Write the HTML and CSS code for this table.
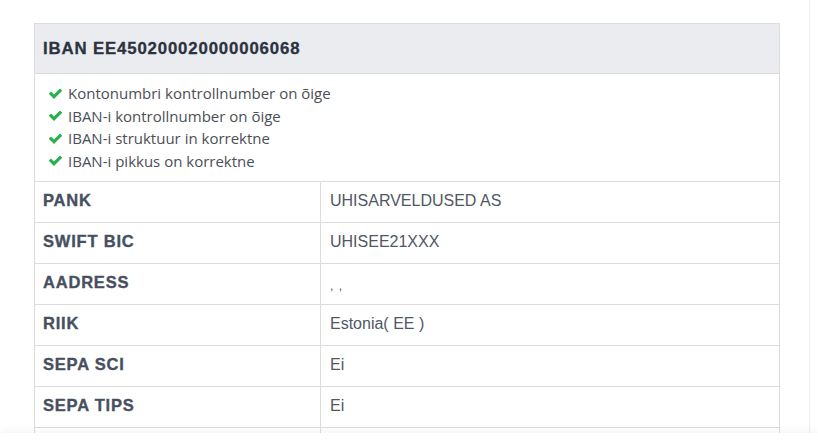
FILE: index.html
```html
<!DOCTYPE html>
<html lang="et">
<head>
<meta charset="utf-8">
<title>IBAN EE450200020000006068</title>
<link rel="stylesheet" href="styles.css">
</head>
<body>
<div class="page">
  <div class="card">
    <div class="card-head">IBAN EE450200020000006068</div>
    <ul class="checks">
      <li><svg class="ok" viewBox="0 250 1792 1300"><path d="M1671 566q0 40-28 68l-724 724-136 136q-28 28-68 28t-68-28l-136-136-362-362q-28-28-28-68t28-68l136-136q28-28 68-28t68 28l294 295 656-657q28-28 68-28t68 28l136 136q28 28 28 68z"/></svg>Kontonumbri kontrollnumber on õige</li>
      <li><svg class="ok" viewBox="0 250 1792 1300"><path d="M1671 566q0 40-28 68l-724 724-136 136q-28 28-68 28t-68-28l-136-136-362-362q-28-28-28-68t28-68l136-136q28-28 68-28t68 28l294 295 656-657q28-28 68-28t68 28l136 136q28 28 28 68z"/></svg>IBAN-i kontrollnumber on õige</li>
      <li><svg class="ok" viewBox="0 250 1792 1300"><path d="M1671 566q0 40-28 68l-724 724-136 136q-28 28-68 28t-68-28l-136-136-362-362q-28-28-28-68t28-68l136-136q28-28 68-28t68 28l294 295 656-657q28-28 68-28t68 28l136 136q28 28 28 68z"/></svg>IBAN-i struktuur in korrektne</li>
      <li><svg class="ok" viewBox="0 250 1792 1300"><path d="M1671 566q0 40-28 68l-724 724-136 136q-28 28-68 28t-68-28l-136-136-362-362q-28-28-28-68t28-68l136-136q28-28 68-28t68 28l294 295 656-657q28-28 68-28t68 28l136 136q28 28 28 68z"/></svg>IBAN-i pikkus on korrektne</li>
    </ul>
    <div class="rows">
      <div class="label">PANK</div><div class="value">UHISARVELDUSED AS</div>
      <div class="label">SWIFT BIC</div><div class="value">UHISEE21XXX</div>
      <div class="label">AADRESS</div><div class="value low">, ,</div>
      <div class="label">RIIK</div><div class="value">Estonia( EE )</div>
      <div class="label">SEPA SCI</div><div class="value">Ei</div>
      <div class="label">SEPA TIPS</div><div class="value">Ei</div>
      <div class="label"></div><div class="value"></div>
    </div>
  </div>
</div>
<div class="bottom-fade"></div>
</body>
</html>
```

FILE: styles.css
```css
html, body {
  margin: 0;
  padding: 0;
  background: #ffffff;
  overflow: hidden;
}

.page {
  width: 810px;
  height: 442px;
  box-sizing: border-box;
  border-right: 1px solid #efefef;
  padding: 23px 0 0 34px;
}

.card {
  width: 746px;
  box-sizing: border-box;
  border: 1px solid #dcdcdc;
  border-bottom: none;
  background: #fff;
}

.card-head {
  height: 49px;
  display: flex;
  align-items: center;
  padding-left: 8px;
  background: #ebecf0;
  border-bottom: 1px solid #dcdcdc;
  font-family: "Liberation Sans", Arial, sans-serif;
  font-weight: bold;
  font-size: 16.8px;
  letter-spacing: 0.85px;
  -webkit-text-stroke: 0.3px #2b3340;
  color: #2b3340;
}

.checks {
  list-style: none;
  margin: 0;
  padding: 8px 0 9px 13px;
  border-bottom: 1px solid #dcdcdc;
  font-family: "Open Sans", sans-serif;
  font-size: 15px;
  line-height: 22.5px;
  color: #4b4f56;
}

.checks li {
  display: flex;
  align-items: center;
}

.ok {
  width: 15px;
  height: 11px;
  fill: #27b04b;
  margin-right: 5px;
  flex: none;
}

.rows {
  display: grid;
  grid-template-columns: 286px 1fr;
  grid-auto-rows: 41px;
}

.rows > div {
  box-sizing: border-box;
  border-bottom: 1px solid #dcdcdc;
  display: flex;
  align-items: center;
  padding-left: 8px;
  padding-bottom: 3px;
}

.label {
  border-right: 1px solid #dcdcdc;
  font-family: "Liberation Sans", Arial, sans-serif;
  font-weight: bold;
  font-size: 16.5px;
  letter-spacing: 0.8px;
  -webkit-text-stroke: 0.35px #47505f;
  color: #47505f;
}

.value {
  padding-left: 9px !important;
  font-family: "Liberation Sans", Arial, sans-serif;
  font-size: 16px;
  color: #4f5764;
}

.value.low {
  align-items: flex-end !important;
  padding-bottom: 11px !important;
  font-size: 12px;
  letter-spacing: 1px;
}

.bottom-fade {
  position: fixed;
  left: 0;
  right: 0;
  bottom: 0;
  height: 9px;
  background: #ffffff;
  box-shadow: 0 -3px 6px rgba(0, 0, 0, 0.04);
}
```
